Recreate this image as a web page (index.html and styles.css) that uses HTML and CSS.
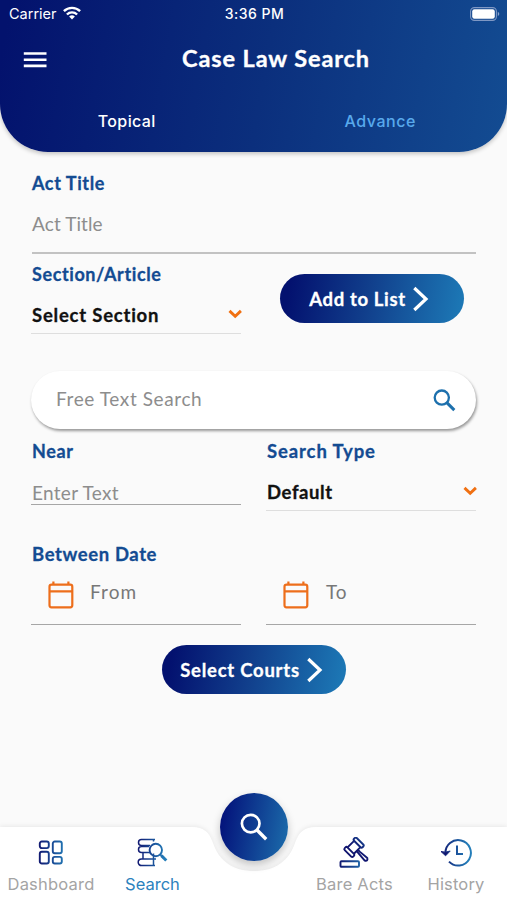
FILE: index.html
```html
<!DOCTYPE html>
<html lang="en">
<head>
<meta charset="utf-8">
<title>Case Law Search</title>
<link rel="stylesheet" href="styles.css">
</head>
<body>
<div class="app">
  <header class="header">
    <div class="status">
      <div class="carrier"><span>Carrier</span>
        <svg width="18" height="14" viewBox="0 0 18 14"><g fill="none" stroke="#fff" stroke-width="2.4"><path d="M.9 5.2a11.6 11.6 0 0 1 16.2 0"/><path d="M3.9 8.5a7.3 7.3 0 0 1 10.2 0"/></g><path fill="#fff" d="M6.1 10.6a4.1 4.1 0 0 1 5.8 0L9 13.6z"/></svg>
      </div>
      <span class="time">3:36 PM</span>
      <svg class="battery" width="30" height="14" viewBox="0 0 30 14"><rect x=".6" y=".6" width="25.8" height="12.8" rx="3.8" fill="none" stroke="#7f98c4" stroke-width="1.1"/><rect x="2.2" y="2.2" width="22.6" height="9.6" rx="2.2" fill="#fff"/><path d="M27.8 4.8q3 2.2 0 4.4z" fill="#8ba3cc"/></svg>
    </div>
    <div class="titlebar">
      <svg class="menu" width="24" height="18" viewBox="0 0 24 18"><path stroke="#fff" stroke-width="2.6" d="M.8 2.5h22.7M.8 8.7h22.7M.8 14.9h22.7"/></svg>
      <h1 class="title">Case Law Search</h1>
    </div>
    <nav class="tabs"><span class="tab active">Topical</span><span class="tab">Advance</span></nav>
  </header>

  <main class="form">
    <label class="label label-act">Act Title</label>
    <div class="field act"><span class="ph ph-act">Act Title</span></div>
    <div class="row section-row">
      <div class="col">
        <label class="label label-section">Section/Article</label>
        <div class="select"><span class="value value-section">Select Section</span>
          <svg width="14" height="10" viewBox="0 0 14 10"><path d="M1.5 1.9 7.2 7.2l5.7-5.3" fill="none" stroke="#f07012" stroke-width="2.9"/></svg></div>
      </div>
      <div class="col center">
        <button class="pill"><span class="pill-add">Add to List</span>
          <svg width="17" height="26" viewBox="0 0 17 26"><path d="M2.3 2 14 13 2.3 24" fill="none" stroke="#fff" stroke-width="3.2"/></svg></button>
      </div>
    </div>
    <div class="searchbox"><span class="ph ph-free">Free Text Search</span>
      <svg width="23" height="23" viewBox="0 0 23 23" fill="none" stroke="#1d70ad"><circle cx="8.8" cy="8.6" r="7.1" stroke-width="2.3"/><path d="m13.8 13.6 7.5 7.5" stroke-width="3"/></svg>
    </div>
    <div class="row">
      <div class="col">
        <label class="label label-near">Near</label>
        <div class="field near"><span class="ph ph-enter">Enter Text</span></div>
      </div>
      <div class="col">
        <label class="label label-type">Search Type</label>
        <div class="select"><span class="value value-default">Default</span>
          <svg width="14" height="10" viewBox="0 0 14 10"><path d="M1.5 1.9 7.2 7.2l5.7-5.3" fill="none" stroke="#f07012" stroke-width="2.9"/></svg></div>
      </div>
    </div>
    <label class="label label-between">Between Date</label>
    <div class="row">
      <div class="date">
        <svg width="26" height="28" viewBox="0 0 26 28" fill="none" stroke="#ed6e1b" stroke-width="2.2"><rect x="1.5" y="3.7" width="22.8" height="22.6" rx="2"/><path d="M2 10.3h22M5.4.5v3M20.4.5v3"/></svg>
        <span class="ph ph-from">From</span></div>
      <div class="date">
        <svg width="26" height="28" viewBox="0 0 26 28" fill="none" stroke="#ed6e1b" stroke-width="2.2"><rect x="1.5" y="3.7" width="22.8" height="22.6" rx="2"/><path d="M2 10.3h22M5.4.5v3M20.4.5v3"/></svg>
        <span class="ph ph-to">To</span></div>
    </div>
    <div class="center">
      <button class="pill"><span class="pill-courts">Select Courts</span>
        <svg width="17" height="26" viewBox="0 0 17 26"><path d="M2.3 2 14 13 2.3 24" fill="none" stroke="#fff" stroke-width="3.2"/></svg></button>
    </div>
  </main>

  <footer class="bottom">
    <svg class="bar" width="507" height="84" viewBox="0 0 507 84"><path d="M0 11h192c12 0 17 5 21 16 6 18 20 28 41 28s35-10 41-28c4-11 9-16 21-16h191v73H0z" fill="#fff"/></svg>
    <div class="items">
      <a class="item"><svg width="26" height="26" viewBox="0 0 26 26" fill="none" stroke="url(#ink)" stroke-width="1.9"><defs><linearGradient id="ink" gradientUnits="userSpaceOnUse" x1="0" y1="0" x2="28" y2="0"><stop offset="0" stop-color="#10156f"/><stop offset="1" stop-color="#237db9"/></linearGradient></defs><rect x="1.8" y="1.5" width="9" height="6.6" rx="2"/><rect x="14.8" y="1.5" width="9" height="11.7" rx="2"/><rect x="1.8" y="11.8" width="9" height="11.7" rx="2"/><rect x="14.8" y="16.9" width="9" height="6.6" rx="2"/></svg><span class="nav-wide">Dashboard</span></a>
      <a class="item on"><svg width="32" height="30" viewBox="0 0 32 30" fill="none" stroke="url(#ink)" stroke-width="1.5"><path d="M18 1.5H4.5a3 3 0 0 0 0 6H13M16.500 1.5v2M12 8.500H4.500a3 3 0 0 0 0 6H13.500M6 14.500v6M16.500 15.500v5M19 21H4.500a3.300 3.300 0 0 0 0 6.600H18M16.500 21v6.500"/><circle cx="18.8" cy="12" r="6.2" stroke-width="1.9"/><path d="m23.2 16.4 1.5 1.5" stroke-width="1.9"/><path d="m24.4 17.6 4.9 4.9" stroke-width="3"/></svg><span>Search</span></a>
      <a class="item gap"></a>
      <a class="item"><svg width="32" height="32" viewBox="0 0 32 32" fill="none" stroke="url(#ink)" stroke-width="1.9" stroke-linejoin="round"><rect x="1.5" y="24.2" width="18.5" height="5.6" rx="1"/><g transform="translate(15 10.300) rotate(-45)"><path d="M-5-4.500H5M-5 4.500H5"/><rect x="-8.500" y="-6" width="3.800" height="12" rx="1.400"/><rect x="4.700" y="-6" width="3.800" height="12" rx="1.400"/><path d="M-1 4.500v3l-.8 9.500q1.800 3 3.600 0L1 7.500v-3"/></g></svg><span class="nav-wide">Bare Acts</span></a>
      <a class="item"><svg width="32" height="30" viewBox="0 0 32 30" fill="none" stroke="url(#ink)" stroke-width="2"><path d="M5.500 15.500A12.700 12.700 0 1 1 9 23.600M17 7.500V16h6"/><path d="m1 13.500 4.600 4.300L10.200 13Q5.500 15 1 13.500z" fill="#10156f" stroke-width="1"/></svg><span class="nav-history">History</span></a>
    </div>
    <div class="fab"><svg width="28" height="28" viewBox="0 0 28 28" fill="none" stroke="#fff"><circle cx="10.7" cy="10.6" r="8.8" stroke-width="2.7"/><path d="m17 17 9.200 9.200" stroke-width="3.4"/></svg></div>
  </footer>
</div>
</body>
</html>
```
FILE: styles.css
```css
* { box-sizing: border-box; }
body { margin: 0; background: #fafafa; font-family: Lato, sans-serif; }
svg { display: block; flex: none; }
.app { width: 507px; height: 900px; display: flex; flex-direction: column; overflow: hidden; }

.header { height: 152px; flex: none; border-radius: 0 0 48px 48px; color: #fff; background: linear-gradient(100deg, #03126d 2%, #0b2f7d 52%, #134c92 100%); box-shadow: 0 2px 4px rgba(0,0,0,.22); }
.status { display: grid; grid-template-columns: 1fr auto 1fr; align-items: center; height: 28px; padding: 0 7px 0 9px; font: 500 14px/28px Inter, sans-serif; }
.carrier { display: flex; align-items: center; gap: 6px; font-weight: 400; font-size: 14.5px; }
.carrier svg { margin-top: -2px; }
.time { letter-spacing: .45px; }
.battery { justify-self: end; margin-top: -1px; }
.titlebar { display: grid; grid-template-columns: 80px 1fr 58px; align-items: center; height: 63px; padding-left: 23px; }
.title { margin: -3px 0 0; text-align: center; font-size: 23.5px; line-height: 30px; font-weight: 700; letter-spacing: .9px; -webkit-text-stroke: .35px; }
.tabs { display: grid; grid-template-columns: 1fr 1fr; height: 61px; line-height: 61px; text-align: center; font-family: Inter, sans-serif; font-size: 16px; font-weight: 500; }
.tab { color: #58a9ec; letter-spacing: .55px; }
.tab.active { color: #fff; letter-spacing: .4px; }

.form { flex: 1; padding: 19px 31px 0 32px; }
.label, .value, .pill { -webkit-text-stroke: .3px; }
.label { display: block; height: 24px; line-height: 25px; color: #134b92; font-weight: 700; font-size: 18px; letter-spacing: .6px; white-space: nowrap; }
.label-section { line-height: 24px; }
.label-type { font-size: 18.5px; letter-spacing: .9px; }
.label-between { font-size: 18.5px; letter-spacing: .6px; }
.ph { color: #8d8d8d; font-size: 19px; letter-spacing: .3px; white-space: nowrap; }
.ph-act { letter-spacing: .1px; }
.ph-free { letter-spacing: .6px; margin-top: -3px; }
.value { color: #111; font-weight: 700; font-size: 18.5px; letter-spacing: .78px; }
.value-default { letter-spacing: .6px; }
.field.act { height: 59px; line-height: 58px; border-bottom: 2px solid #c2c2c2; }
.row { display: grid; grid-template-columns: 210px 210px; column-gap: 25px; margin-left: -1px; }
.row .label, .row .select, .field.near { padding-left: 1px; }
.section-row { padding-top: 8px; }
.select { display: flex; align-items: center; justify-content: space-between; height: 48px; padding-top: 10px; border-bottom: 1px solid #dedede; }
.select svg { margin: 0 -1px 1px 0; }
.center { display: flex; justify-content: center; align-items: flex-start; }
.section-row .center { padding-top: 12px; }
.pill { display: flex; align-items: center; justify-content: center; width: 184px; height: 49px; gap: 6px; padding: 0; border: 0; border-radius: 25px; color: #fff; font: 700 18.5px/24px Lato, sans-serif; letter-spacing: .65px; background: linear-gradient(100deg, #03116f 6%, #113f8c 48%, #1c76b4 96%); }
.pill-courts { letter-spacing: .75px; }
.section-row .pill { padding-right: 5px; margin-right: -1px; }
.pill-courts + svg { margin-right: 4px; }
.searchbox { height: 58px; margin: 37px 0 10px -1px; padding: 0 20px 0 25px; display: flex; align-items: center; justify-content: space-between; border-radius: 29px; background: #fff; box-shadow: 1px 2px 3px rgba(0,0,0,.4); }
.field.near { height: 42px; line-height: 20px; padding-top: 20px; border-bottom: 1px solid #a6a6a6; }
.label-between { margin-top: 31px; }
.date { display: flex; height: 59px; border-bottom: 1px solid #a6a6a6; padding: 15px 0 0 17px; gap: 16px; }
.date .ph { line-height: 21px; color: #777; }
.ph-from { letter-spacing: 1.1px; }
.date .ph-to { letter-spacing: .8px; padding-left: 1px; }
.form > .center { padding-top: 20px; margin-left: -1px; }

.bottom { position: relative; height: 84px; flex: none; }
.bar { position: absolute; left: 0; top: 0; filter: drop-shadow(0 -1px 2px rgba(0,0,0,.07)); }
.items { position: relative; display: grid; grid-template-columns: 102px 101px 101px 101px 102px; height: 84px; padding-top: 19px; }
.item { display: grid; grid-template-rows: 36px 26px; justify-items: center; align-items: center; color: #a4a4a4; font-family: Inter, sans-serif; font-size: 16.5px; white-space: nowrap; }
.nav-wide { letter-spacing: .2px; }
.nav-history { letter-spacing: .15px; }
.item.on { color: #2c82bd; }
.fab { position: absolute; left: 220px; top: -23px; width: 68px; height: 68px; border-radius: 50%; display: grid; place-items: center; background: linear-gradient(100deg, #03117a 5%, #1c6eac 100%); box-shadow: 0 4px 8px rgba(0,0,0,.22); }
```
